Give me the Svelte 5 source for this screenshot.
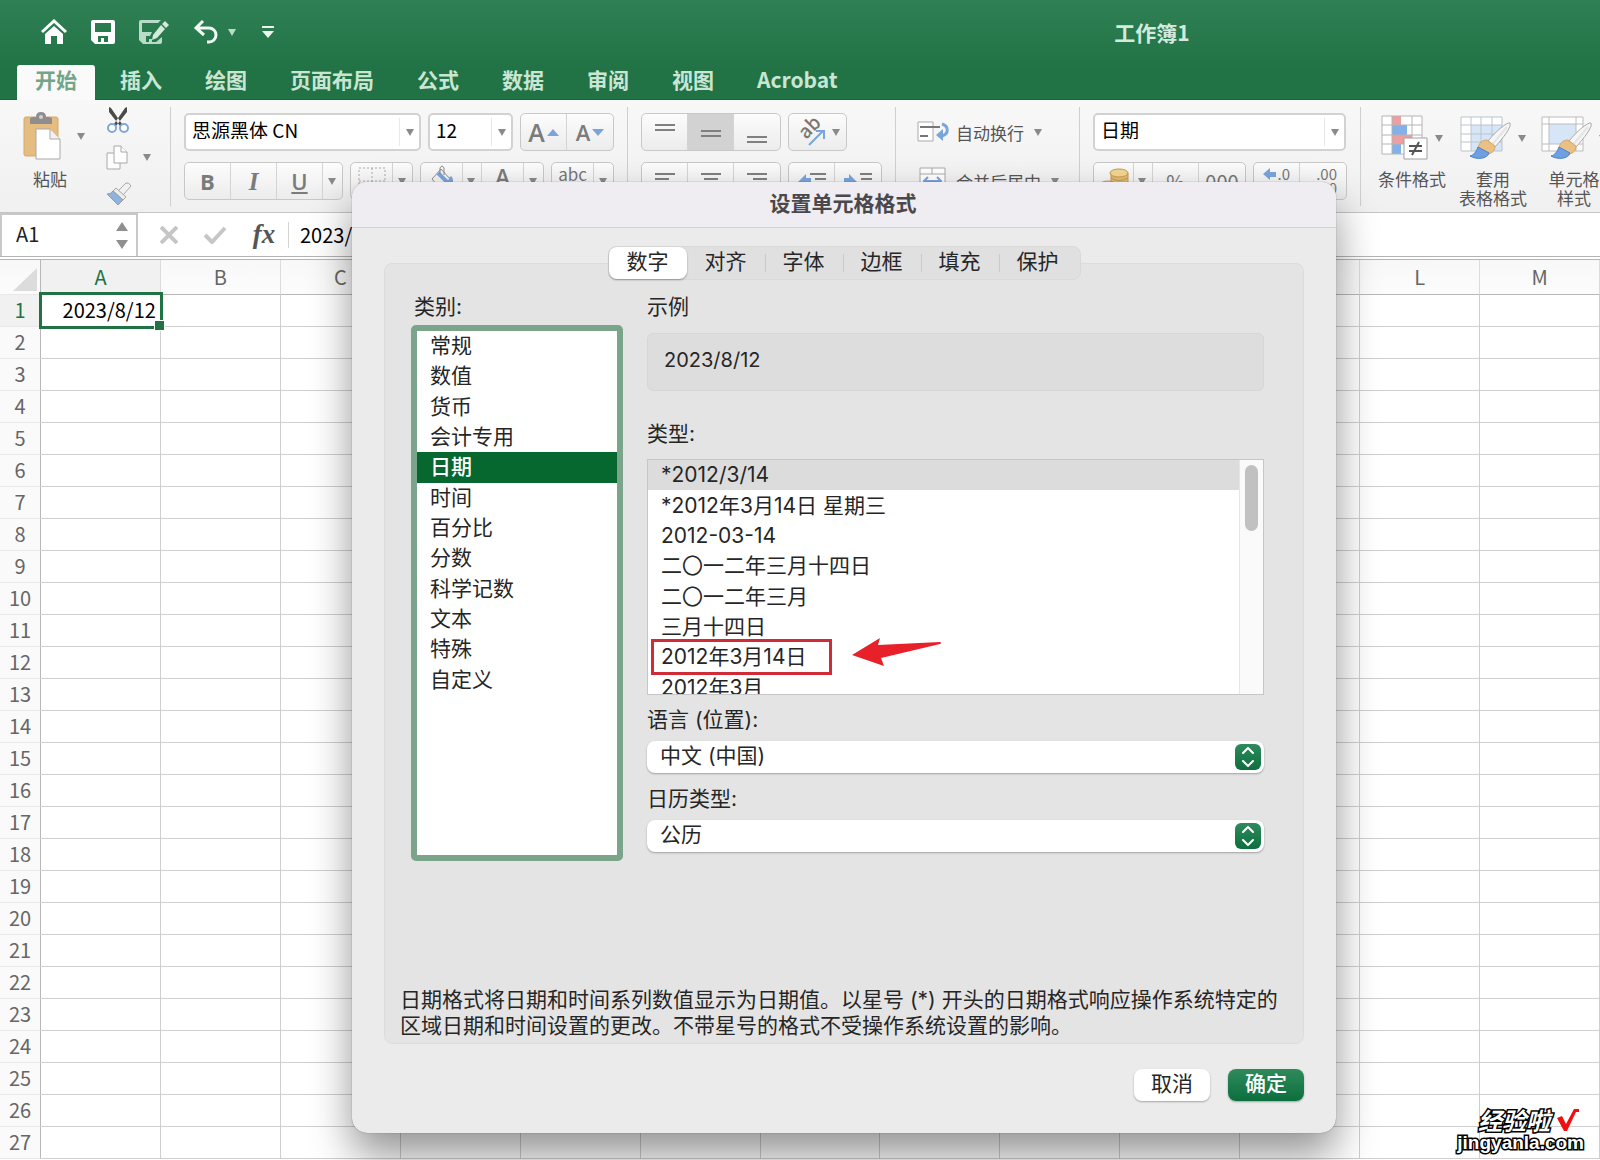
<script>
  const ribbonTabs = ['开始', '插入', '绘图', '页面布局', '公式', '数据', '审阅', '视图', 'Acrobat'];
  const columns = ['A', 'B', 'C', 'D', 'E', 'F', 'G', 'H', 'I', 'J', 'K', 'L', 'M'];
  const rows = Array.from({ length: 27 }, (_, i) => i + 1);

  const dialogTabs = ['数字', '对齐', '字体', '边框', '填充', '保护'];
  const categories = [
    '常规', '数值', '货币', '会计专用', '日期', '时间',
    '百分比', '分数', '科学记数', '文本', '特殊', '自定义'
  ];
  const types = [
    '*2012/3/14',
    '*2012年3月14日 星期三',
    '2012-03-14',
    '二〇一二年三月十四日',
    '二〇一二年三月',
    '三月十四日',
    '2012年3月14日',
    '2012年3月'
  ];

  let activeRibbon = $state('开始');
  let activeTab = $state('数字');
  let category = $state('日期');
  let type = $state('*2012/3/14');
  let cellValue = $state('2023/8/12');
</script>

{#snippet caret()}
  <svg class="caret" width="8" height="7" viewBox="0 0 8 7"><path d="M0 0h8L4 7z" fill="#8a8a8a" /></svg>
{/snippet}

{#snippet lines(widths, top, align)}
  <svg width="24" height="24" viewBox="0 0 24 24" stroke="#808080" stroke-width="2">
    {#each widths as w, i}
      {@const x = align === 'left' ? 2 : align === 'right' ? 22 - w : 12 - w / 2}
      <path d="M{x} {top + i * 5}h{w}" />
    {/each}
  </svg>
{/snippet}

{#snippet brush()}
  <path d="M50 8c-3-1-14 8-22 18l7 6c8-9 17-20 15-24z" fill="#f6f6f6" stroke="#a9a9a9" />
  <path d="M31 31 47 12" stroke="#e4e4e4" stroke-width="2" />
  <path d="M27 25c-5 0-8 3-9 8l10 6c5-1 7-4 7-8z" fill="#ebc083" stroke="#d3a566" />
  <path d="M18 32c-2 5-4 8-8 9 7 4 17 3 19-3z" fill="#6d9fe3" stroke="#4d80c8" />
{/snippet}

{#snippet stepper()}
  <span class="stepper">
    <svg width="14" height="20" viewBox="0 0 14 20" fill="none" stroke="#fff" stroke-width="2" stroke-linecap="round" stroke-linejoin="round">
      <path d="M2 6l5-5 5 5M2 14l5 5 5-5" />
    </svg>
  </span>
{/snippet}

<div class="app">
  <header>
    <div class="title-row">
      <div class="quick">
        <button aria-label="主页">
          <svg width="26" height="26" viewBox="0 0 26 26">
            <path d="M1 13 13 2l12 11" fill="none" stroke="#fff" stroke-width="3" />
            <path d="M13 7l9 8v10h-6v-8h-6v8H4V15z" fill="#fff" />
          </svg>
        </button>
        <button aria-label="保存">
          <svg width="24" height="24" viewBox="0 0 24 24">
            <path fill="#fff" fill-rule="evenodd" d="M2 0h20q2 0 2 2v20q0 2-2 2H4l-4-4V2q0-2 2-2zM4 3v9h16V3zM7 16v6h3v-4h3v4h4v-6z" />
          </svg>
        </button>
        <button aria-label="另存为">
          <svg width="30" height="24" viewBox="0 0 30 24">
            <path fill="#b9dcc8" fill-rule="evenodd" d="M2 0h20l-3 3H3v9h10l-2 4H7v6h3v-3h3v3h4l6-5v5q0 2-2 2H4l-4-4V2q0-2 2-2z" />
            <path fill="#d3eadc" d="M26 1l4 4-3 3-4-4zM22 5l4 4-8 9-5 2 1-5z" />
          </svg>
        </button>
        <button class="undo" aria-label="撤消">
          <svg width="25" height="24" viewBox="0 0 25 24" fill="none" stroke="#f1f9f4" stroke-width="3">
            <path d="M10 1 3 8l8 7M3 8h13a7 7 0 0 1 0 14h-2" />
          </svg>
          <svg width="8" height="7" viewBox="0 0 8 7"><path d="M0 0h8L4 7z" fill="#b9dcc8" /></svg>
        </button>
        <button aria-label="自定义工具栏">
          <svg width="12" height="12" viewBox="0 0 12 12"><path d="M0 0h12v2H0zM0 5h12l-6 7z" fill="#e9f5ee" /></svg>
        </button>
      </div>
      <h1>工作簿1</h1>
    </div>
    <nav>
      {#each ribbonTabs as tab}
        <button class:active={tab === activeRibbon} onclick={() => (activeRibbon = tab)}>{tab}</button>
      {/each}
    </nav>
  </header>

  <div class="ribbon">
    <div class="group clipboard">
      <button class="paste">
        <span class="with-caret">
          <svg width="40" height="48" viewBox="0 0 40 48">
            <rect x="1" y="5" width="34" height="39" rx="2" fill="#e6bd80" stroke="#d4a968" />
            <path d="M7 12V7q0-2 3-2h3q0-5 5-5t5 5h3q3 0 3 2v5z" fill="#8e8e8e" />
            <circle cx="18" cy="5" r="2" fill="#d0d0d0" />
            <path d="M13 17h14l10 10v20H13z" fill="#fff" stroke="#a9a9a9" />
            <path d="M27 17v10h10" fill="#f2f2f2" stroke="#a9a9a9" />
          </svg>
          {@render caret()}
        </span>
        <span>粘贴</span>
      </button>
      <div class="clip-tools">
        <button aria-label="剪切">
          <svg width="24" height="26" viewBox="0 0 24 26">
            <path d="M3 0 5 1 16 17l-2 2L3 5zM21 0l-2 1L8 17l2 2L21 5z" fill="#4a4a4a" />
            <g fill="#fff" stroke="#7ea6d8" stroke-width="2"><circle cx="6" cy="21" r="4" /><circle cx="18" cy="21" r="4" /></g>
          </svg>
        </button>
        <button class="with-caret" aria-label="复制">
          <svg width="24" height="26" viewBox="0 0 24 26" fill="#fdfdfd" stroke="#a8a8a8">
            <path d="M1 8h13v16H1z" /><path d="M8 1h7l6 6v11H8z" /><path d="M15 1v6h6" />
          </svg>
          {@render caret()}
        </button>
        <button aria-label="格式刷">
          <svg width="26" height="24" viewBox="0 0 26 24">
            <path d="M12 9l8-8q3-1 5 3l-8 9z" fill="#f1f1f1" stroke="#a8a8a8" />
            <path d="M10 6l10 9-3 3L7 9z" fill="#ececec" stroke="#a8a8a8" />
            <path d="M7 9l10 9-5 5L1 12q4 0 6-3z" fill="#8db4de" stroke="#9c9c9c" />
          </svg>
        </button>
      </div>
    </div>

    <div class="group">
      <div class="tool-row">
        <div class="combo font-name">
          <select aria-label="字体"><option>思源黑体 CN</option></select>
          <i>{@render caret()}</i>
        </div>
        <div class="combo font-size">
          <select aria-label="字号"><option>12</option></select>
          <i>{@render caret()}</i>
        </div>
        <div class="buttons">
          <button class="tool letter">A<svg width="12" height="7" viewBox="0 0 12 7"><path d="M6 0l6 7H0z" fill="#7aa5dc" /></svg></button>
          <button class="tool letter small">A<svg width="12" height="7" viewBox="0 0 12 7"><path d="M0 0h12L6 7z" fill="#7aa5dc" /></svg></button>
        </div>
      </div>
      <div class="tool-row">
        <div class="buttons">
          <button class="tool letter"><b>B</b></button>
          <button class="tool letter italic"><b>I</b></button>
          <button class="tool letter plain"><u>U</u></button>
          <button class="drop" aria-label="下划线">{@render caret()}</button>
        </div>
        <div class="buttons">
          <button class="tool narrow" aria-label="边框">
            <svg width="28" height="28" viewBox="0 0 28 28" fill="none" stroke="#aaa" stroke-dasharray="2 2"><path d="M1 1h26v26H1zM14 1v26M1 14h26" /></svg>
          </button>
          <button class="drop" aria-label="边框选项">{@render caret()}</button>
        </div>
        <div class="buttons">
          <button class="tool narrow" aria-label="填充颜色">
            <svg width="22" height="32" viewBox="0 0 22 32">
              <path d="M10 4 20 15 10 25 1 14z" fill="#f4f4f4" stroke="#8c8c8c" />
              <path d="M7 8l10 10 3-3" fill="none" stroke="#7aa5dc" stroke-width="4" />
              <path d="M19 12q3 4 1 9" fill="none" stroke="#7aa5dc" stroke-width="3" />
              <path d="M9 9V3q2-4 4 0v7" fill="none" stroke="#8c8c8c" />
            </svg>
          </button>
          <button class="drop" aria-label="填充选项">{@render caret()}</button>
          <button class="tool narrow letter font-color">A</button>
          <button class="drop" aria-label="字体颜色">{@render caret()}</button>
        </div>
        <div class="buttons">
          <button class="tool narrow phonetic">abc</button>
          <button class="drop" aria-label="拼音选项">{@render caret()}</button>
        </div>
      </div>
    </div>

    <div class="group">
      <div class="tool-row">
        <div class="buttons">
          <button class="tool" aria-label="顶端对齐">{@render lines([20, 20], 5, 'center')}</button>
          <button class="tool on" aria-label="垂直居中">{@render lines([20, 20], 11, 'center')}</button>
          <button class="tool" aria-label="底端对齐">{@render lines([20, 20], 17, 'center')}</button>
        </div>
        <div class="buttons">
          <button class="tool orient" aria-label="方向">
            <svg width="32" height="32" viewBox="0 0 32 32">
              <text x="11" y="24" transform="rotate(-45 11 24)" font-size="19" font-weight="500" fill="#777">ab</text>
              <path d="M14 29 28 15M21 15h8v8" fill="none" stroke="#7aa5dc" stroke-width="2" />
            </svg>
            {@render caret()}
          </button>
        </div>
      </div>
      <div class="tool-row">
        <div class="buttons">
          <button class="tool" aria-label="左对齐">{@render lines([20, 14, 20], 5, 'left')}</button>
          <button class="tool" aria-label="居中">{@render lines([20, 14, 20], 5, 'center')}</button>
          <button class="tool" aria-label="右对齐">{@render lines([20, 14, 20], 5, 'right')}</button>
        </div>
        <div class="buttons">
          <button class="tool" aria-label="减少缩进">
            <svg width="28" height="24" viewBox="0 0 28 24"><path d="M0 13l8-8v4h5v7H8v4z" fill="#7aa5dc" /><path d="M12 5h16M17 10h11M17 15h11" stroke="#808080" stroke-width="2" /></svg>
          </button>
          <button class="tool" aria-label="增加缩进">
            <svg width="28" height="24" viewBox="0 0 28 24"><path d="M13 13 5 5v4H0v7h5v4z" fill="#7aa5dc" /><path d="M16 5h12M17 10h11M17 15h11" stroke="#808080" stroke-width="2" /></svg>
          </button>
        </div>
      </div>
    </div>

    <div class="group wrap">
      <button class="labelled">
        <svg width="33" height="24" viewBox="0 0 33 24">
          <path d="M1 2h15v19H1z" fill="#fff" stroke="#aaa" /><path d="M3 7h20M3 16h8" stroke="#777" stroke-width="2" />
          <path d="M25 4c7 2 7 10 0 12" fill="none" stroke="#7aa5dc" stroke-width="3" /><path d="M19 15l7-6v12z" fill="#7aa5dc" />
        </svg>
        自动换行 {@render caret()}
      </button>
      <button class="labelled">
        <svg width="33" height="28" viewBox="0 0 33 28">
          <path d="M3 1h25v26H3zM3 7h25M15 1v6M3 21h25M15 21v6" fill="#fff" stroke="#aaa" />
          <path d="M8 14h15M11 10l-4 4 4 4M20 10l4 4-4 4" fill="none" stroke="#7aa5dc" stroke-width="2" />
        </svg>
        合并后居中 {@render caret()}
      </button>
    </div>

    <div class="group">
      <div class="tool-row">
        <div class="combo number-format">
          <select aria-label="数字格式"><option>日期</option></select>
          <i>{@render caret()}</i>
        </div>
      </div>
      <div class="tool-row">
        <div class="buttons">
          <button class="tool money" aria-label="货币">
            <svg width="30" height="28" viewBox="0 0 30 28" stroke="#c39a4e">
              <path d="M12 6v18h17V6z" fill="#e3bd70" /><ellipse cx="20" cy="6" rx="9" ry="4" fill="#f3d793" />
              <path d="M12 11q8 5 17 0M12 16q8 5 17 0" fill="none" />
              <ellipse cx="9" cy="18" rx="8" ry="4" fill="#f3d793" />
            </svg>
          </button>
          <button class="drop" aria-label="货币选项">{@render caret()}</button>
          <button class="tool digits">%</button>
          <button class="tool digits">000</button>
        </div>
        <div class="buttons">
          <button class="tool decimals">
            <span><svg width="13" height="12" viewBox="0 0 13 12"><path d="M0 6l7-6v4h6v5H7v3z" fill="#7aa5dc" /></svg>.0</span>
            <span>.00</span>
          </button>
          <button class="tool decimals"><span>.00</span><span>.0</span></button>
        </div>
      </div>
    </div>

    <div class="styles">
      <button>
        <span class="with-caret">
          <svg width="48" height="46" viewBox="0 0 48 46">
            <path d="M1 1h40v38H1z" fill="#fff" />
            <path d="M11 1h9v9h-9zM11 20h20v9H11z" fill="#ee9da0" /><path d="M11 10h15v10H11zM11 29h9v10h-9z" fill="#83b0e8" />
            <path d="M1 1h40v38H1zM11 1v38M31 1v38M1 10h40M1 20h40M1 29h40" fill="none" stroke="#b4b4b4" />
            <path d="M23 23h23v21H23z" fill="#fff" stroke="#a0a0a0" />
            <path d="M28 31h13M28 36h13M38 27l-7 13" stroke="#555" stroke-width="2" />
          </svg>
          {@render caret()}
        </span>
        <span>条件格式</span>
      </button>
      <button>
        <span class="with-caret">
          <svg width="52" height="46" viewBox="0 0 52 46">
            <path d="M1 2h41v34H1z" fill="#fff" /><path d="M11 10h31v26H11z" fill="#d6e6f7" />
            <path d="M1 2h41v34H1zM11 2v34M21 2v34M32 2v34M1 10h41M1 19h41M1 27h41" fill="none" stroke="#bcc4cc" />
            {@render brush()}
          </svg>
          {@render caret()}
        </span>
        <span>套用<br />表格格式</span>
      </button>
      <button>
        <span class="with-caret">
          <svg width="52" height="46" viewBox="0 0 52 46">
            <path d="M1 2h41v34H1z" fill="#fff" /><path d="M8 9h27v20H8z" fill="#d6e6f7" />
            <path d="M1 2h41v34H1zM8 2v34M1 9h41M1 29h41M35 2v34" fill="none" stroke="#bcbcbc" />
            {@render brush()}
          </svg>
          {@render caret()}
        </span>
        <span>单元格<br />样式</span>
      </button>
    </div>
  </div>

  <div class="formula-bar">
    <div class="name-box">
      <input aria-label="名称框" value="A1" />
      <svg width="12" height="28" viewBox="0 0 12 28" fill="#8f8f8f"><path d="M6 0l6 9H0zM0 18h12l-6 9z" /></svg>
    </div>
    <button aria-label="取消输入">
      <svg width="18" height="18" viewBox="0 0 18 18" stroke="#c6c6c6" stroke-width="4"><path d="M1 1l16 16M17 1 1 17" /></svg>
    </button>
    <button aria-label="输入">
      <svg width="24" height="18" viewBox="0 0 24 18" fill="none" stroke="#c6c6c6" stroke-width="4"><path d="M2 9l7 7L22 2" /></svg>
    </button>
    <button class="fx">fx</button>
    <input class="formula" aria-label="编辑栏" bind:value={cellValue} />
  </div>

  <table>
    <thead>
      <tr>
        <th class="corner" aria-label="全选"><svg width="24" height="23" viewBox="0 0 24 23"><path d="M24 0v23H0z" fill="#dcdcdc" /></svg></th>
        {#each columns as col}
          <th class:current={col === 'A'}>{col}</th>
        {/each}
      </tr>
    </thead>
    <tbody>
      {#each rows as row}
        <tr>
          <th class:current={row === 1}>{row}</th>
          {#each columns as col}
            {#if row === 1 && col === 'A'}
              <td class="selected">{cellValue}</td>
            {:else}
              <td></td>
            {/if}
          {/each}
        </tr>
      {/each}
    </tbody>
  </table>

  <div class="dialog" role="dialog" aria-labelledby="dialog-title">
    <h2 id="dialog-title">设置单元格格式</h2>
    <div class="dialog-body">
      <div class="segments">
        {#each dialogTabs as tab}
          <button class:active={tab === activeTab} onclick={() => (activeTab = tab)}>{tab}</button>
        {/each}
      </div>

      <div class="panel">
        <div class="panel-columns">
          <div class="category-col">
            <div class="label">类别:</div>
            <div class="category-list">
              <ul>
                {#each categories as item}
                  <li><button class:active={item === category} onclick={() => (category = item)}>{item}</button></li>
                {/each}
              </ul>
            </div>
          </div>

          <div class="detail-col">
            <div class="label">示例</div>
            <div class="sample">{cellValue}</div>
            <div class="label type-label">类型:</div>
            <div class="type-list">
              <ul>
                {#each types as item, i}
                  <li>
                    <button class:active={item === type} onclick={() => (type = item)}>{item}</button>
                    {#if i === 6}
                      <span class="mark"></span>
                      <svg class="arrow" width="90" height="30" viewBox="0 0 90 30">
                        <path d="M0 17 28 0 26 7 88 4q2 1 0 2L29 20l3 8z" fill="#e8202a" />
                      </svg>
                    {/if}
                  </li>
                {/each}
              </ul>
              <div class="scrollbar"><span></span></div>
            </div>
            <label class="label" for="locale">语言 (位置):</label>
            <div class="popup">
              <select id="locale"><option>中文 (中国)</option></select>
              {@render stepper()}
            </div>
            <label class="label calendar-label" for="calendar">日历类型:</label>
            <div class="popup">
              <select id="calendar"><option>公历</option></select>
              {@render stepper()}
            </div>
          </div>
        </div>
        <p>日期格式将日期和时间系列数值显示为日期值。以星号 (*) 开头的日期格式响应操作系统特定的区域日期和时间设置的更改。不带星号的格式不受操作系统设置的影响。</p>
      </div>

      <div class="actions">
        <button>取消</button>
        <button class="primary">确定</button>
      </div>
    </div>
  </div>

  <div class="watermark">
    <div class="brand">
      经验啦
      <svg width="24" height="24" viewBox="0 0 24 24"><path d="M1 10l5-2 4 8L18 1h5v3h-3L11 23H8z" fill="#f01010" /></svg>
    </div>
    <div class="site">jingyanla.com</div>
  </div>
</div>

<style>
  :global(body) {
    margin: 0;
    overflow: hidden;
  }

  .app {
    position: relative;
    min-height: 100vh;
    overflow: hidden;
    background: #fff;
    color: #222;
    font: 20px/26px 'Noto Sans CJK SC', sans-serif;
  }

  .app :global(*) {
    box-sizing: border-box;
  }

  button,
  input,
  select {
    margin: 0;
    padding: 0;
    border: 0;
    background: none;
    color: inherit;
    font: inherit;
    appearance: none;
    outline: none;
  }

  svg {
    display: block;
    flex: none;
  }

  ul {
    margin: 0;
    padding: 0;
    list-style: none;
  }

  /* title bar and ribbon tabs */
  header {
    height: 100px;
    background: linear-gradient(#2f8054, #217346 70%);
    border-bottom: 1px solid #1c643c;
  }

  .title-row {
    display: grid;
    grid-template-columns: 44% 56%;
    align-items: center;
    height: 64px;
  }

  .quick {
    display: flex;
    align-items: center;
    gap: 24px;
    padding-left: 41px;
  }

  .undo {
    display: flex;
    align-items: center;
    gap: 10px;
  }

  .quick button:last-child {
    margin-left: 2px;
  }

  h1 {
    margin: 0;
    color: #d3eadc;
    font-size: 21px;
    font-weight: 700;
    text-align: center;
  }

  nav {
    display: flex;
    gap: 7px;
    padding: 1px 0 0 17px;
  }

  nav button {
    height: 35px;
    padding: 0 18px 7px;
    border-radius: 3px 3px 0 0;
    color: #c9e6d5;
    font-size: 21px;
    font-weight: 700;
    white-space: nowrap;
  }

  nav button.active {
    background: #fafafa;
    color: #73a588;
  }

  /* ribbon */
  .ribbon {
    display: flex;
    height: 113px;
    padding-top: 7px;
    overflow: hidden;
    background: linear-gradient(#f8f8f8, #f0f0f0);
    border-bottom: 1px solid #c4c4c4;
    color: #555;
    font-size: 17px;
    line-height: 19px;
  }

  .group {
    display: flex;
    flex: none;
    flex-direction: column;
    gap: 11px;
    height: 99px;
    padding: 6px 13px 0;
    border-right: 1px solid #cfcfcf;
  }

  .clipboard {
    flex-direction: row;
    gap: 21px;
    width: 171px;
    padding: 0 0 0 23px;
  }

  .with-caret {
    display: flex;
    align-items: center;
    gap: 14px;
  }

  .paste {
    display: flex;
    flex-direction: column;
    align-items: flex-start;
    gap: 9px;
    padding-top: 5px;
  }

  .paste > span:last-child {
    padding-left: 10px;
  }

  .clip-tools {
    display: flex;
    flex-direction: column;
    justify-content: space-between;
    align-items: flex-start;
  }

  .clip-tools .with-caret {
    gap: 13px;
  }

  .tool-row {
    display: flex;
    gap: 7px;
  }

  .combo {
    position: relative;
    height: 38px;
  }

  .combo select {
    width: 100%;
    height: 100%;
    padding: 0 30px 5px 6px;
    border: 2px solid #d2d2d2;
    border-radius: 5px;
    background: #fff;
    color: #000;
    font-size: 19px;
  }

  .combo i {
    position: absolute;
    top: 5px;
    right: 0;
    bottom: 5px;
    display: flex;
    align-items: center;
    width: 22px;
    padding-left: 6px;
    border-left: 1px solid #e8e8e8;
    pointer-events: none;
  }

  .font-name {
    width: 237px;
  }

  .font-size {
    width: 85px;
  }

  .number-format {
    width: 253px;
  }

  .buttons {
    display: flex;
    height: 38px;
    border: 1px solid #c8c8c8;
    border-radius: 5px;
    background: linear-gradient(#fcfcfc, #ececec);
    overflow: hidden;
  }

  .tool,
  .drop {
    display: flex;
    align-items: center;
    justify-content: center;
    border-right: 1px solid #d4d4d4;
  }

  .tool {
    width: 46px;
  }

  .tool:last-child,
  .drop:last-child {
    border-right: 0;
  }

  .tool.on {
    background: #d2d2d2;
  }

  .tool.narrow {
    width: 42px;
  }

  .tool.money {
    width: 40px;
  }

  .tool.orient {
    gap: 5px;
    width: 57px;
  }

  .drop {
    width: 19px;
    padding-right: 2px;
  }

  .letter {
    gap: 2px;
    color: #7b7b7b;
    font-family: 'Open Sans', sans-serif;
    font-size: 25px;
    font-weight: 600;
  }

  .letter.small,
  .letter.plain {
    font-size: 22px;
  }

  .letter.font-color {
    align-items: flex-start;
    padding-top: 4px;
    font-size: 22px;
  }

  .letter b {
    font-size: 22px;
    font-weight: 700;
  }

  .letter.italic {
    font-family: 'Liberation Serif', serif;
    font-style: italic;
  }

  .letter.italic b {
    font-size: 25px;
  }

  .phonetic {
    align-items: flex-start;
    padding-top: 1px;
    color: #777;
  }

  .digits {
    color: #777;
    font-size: 20px;
  }

  .decimals {
    flex-direction: column;
    align-items: flex-end;
    padding-right: 9px;
    color: #777;
    font-size: 15px;
    line-height: 14px;
  }

  .decimals span {
    display: flex;
    align-items: center;
    gap: 2px;
  }

  .wrap {
    width: 184px;
    padding-left: 21px;
  }

  .labelled {
    display: flex;
    align-items: center;
    gap: 6px;
    height: 38px;
    white-space: nowrap;
  }

  .labelled .caret {
    margin-left: 4px;
  }

  .styles {
    display: flex;
    flex: none;
    gap: 5px;
    padding: 8px 0 0 13px;
  }

  .styles button {
    display: flex;
    flex-direction: column;
    align-items: center;
    gap: 8px;
    width: 76px;
    white-space: nowrap;
  }

  .styles .with-caret {
    gap: 6px;
  }

  /* formula bar */
  .formula-bar {
    display: flex;
    align-items: center;
    height: 47px;
    border-bottom: 4px double #b4b4b4;
    background: #fff;
  }

  .name-box {
    display: flex;
    align-items: center;
    width: 138px;
    height: 100%;
    padding: 0 8px 0 14px;
    border: 2px solid #c8c8c8;
    border-bottom: 0;
  }

  .name-box input {
    flex: 1;
    min-width: 0;
    padding-bottom: 3px;
  }

  .formula-bar button {
    display: flex;
    justify-content: center;
    width: 46px;
  }

  .formula-bar .name-box + button {
    margin-left: 8px;
  }

  .formula-bar .fx {
    width: 50px;
    padding: 0 0 1px 2px;
    color: #555;
    font: italic 700 27px/30px 'Liberation Serif', serif;
  }

  .formula {
    flex: 1;
    height: 26px;
    padding-left: 11px;
    border-left: 1px solid #d4d4d4;
    color: #000;
  }

  /* sheet */
  table {
    width: 100%;
    border-spacing: 0;
    table-layout: fixed;
  }

  th,
  td {
    height: 32px;
    padding: 0 0 2px;
    border-right: 1px solid #cfcfcf;
    border-bottom: 1px solid #cfcfcf;
    line-height: 28px;
  }

  th {
    background: #fafafa;
    color: #666;
    font-weight: 400;
  }

  thead th {
    height: 35px;
    padding: 0;
    border-right-color: #dcdcdc;
    border-bottom-color: #b8b8b8;
    background: linear-gradient(#f8f8f8, #fcfcfc);
  }

  th:first-child {
    width: 41px;
    border-right-color: #b8b8b8;
    border-bottom-color: #e8e8e8;
  }

  .corner svg {
    margin: 4px 0 0 13px;
  }

  th.current {
    background: #f0f1f0;
    color: #217346;
  }

  .selected {
    position: relative;
    padding-right: 4px;
    color: #000;
    text-align: right;
  }

  .selected::before {
    content: '';
    position: absolute;
    inset: -3px -3px -3px -2px;
    border: 3px solid #217346;
  }

  .selected::after {
    content: '';
    position: absolute;
    right: -5px;
    bottom: -5px;
    width: 9px;
    height: 9px;
    border: 1px solid #fff;
    background: #217346;
  }

  /* format cells dialog */
  .dialog {
    position: absolute;
    top: 182px;
    left: 22%;
    right: 16.5%;
    border-radius: 15px;
    overflow: hidden;
    background: #ebebeb;
    box-shadow: 0 0 1px rgba(0, 0, 0, 0.6), 0 22px 42px rgba(0, 0, 0, 0.42);
    color: #262626;
    font: 21px/26px Inter, 'Noto Sans CJK SC', sans-serif;
  }

  h2 {
    margin: 0;
    padding: 9px 2px 10px 0;
    border-bottom: 1px solid #d4d1d7;
    background: #efecf2;
    color: #49484c;
    font-size: 21px;
    font-weight: 700;
    text-align: center;
  }

  .dialog-body {
    padding: 18px 32px 32px;
  }

  .segments {
    position: relative;
    display: flex;
    width: max-content;
    margin: 0 auto -17px;
    padding: 0 3px 0 0;
    border: 1px solid #d9d9d9;
    border-radius: 8px;
    background: #e0e0e0;
  }

  .segments button {
    position: relative;
    width: 78px;
    height: 32px;
    padding-bottom: 2px;
    border-radius: 8px;
  }

  .segments button.active {
    background: #fff;
    box-shadow: 0 1px 2px rgba(0, 0, 0, 0.35);
  }

  .segments button:nth-child(n + 3)::before {
    content: '';
    position: absolute;
    top: 7px;
    bottom: 7px;
    left: 0;
    width: 1px;
    background: #cacaca;
  }

  .panel {
    padding: 30px 39px 4px 26px;
    border: 1px solid #dcdcdc;
    border-radius: 8px;
    background: #e4e4e4;
  }

  .panel-columns {
    display: flex;
    gap: 24px;
  }

  .category-col .label {
    padding-left: 3px;
  }

  .category-list {
    width: 212px;
    height: 536px;
    margin-top: 5px;
    border: 6px solid #7aa58a;
    border-radius: 5px;
    background: #fff;
  }

  .category-list ul {
    display: grid;
    grid-template-rows: repeat(12, 1fr);
    height: 364px;
  }

  .dialog li button {
    display: flex;
    align-items: center;
    width: 100%;
    height: 100%;
    padding: 0 13px;
    white-space: nowrap;
  }

  .category-list button.active {
    background: #06672f;
    color: #fff;
    font-weight: 500;
  }

  .detail-col {
    flex: 1;
    min-width: 0;
  }

  .label {
    display: block;
  }

  .sample {
    height: 58px;
    margin-top: 13px;
    padding: 13px 16px;
    border: 1px solid #d6d6d6;
    border-radius: 6px;
    background: #ddd;
    font-size: 20px;
  }

  .type-label {
    margin-top: 30px;
  }

  .type-list {
    display: flex;
    height: 236px;
    margin: 12px 0;
    border: 1px solid #c6c6c6;
    background: #fff;
    overflow: hidden;
  }

  .type-list ul {
    display: grid;
    flex: 1;
    grid-template-rows: repeat(8, 1fr);
    height: 243px;
  }

  .type-list li {
    position: relative;
  }

  .type-list button.active {
    background: #dcdcdc;
  }

  .mark {
    position: absolute;
    top: -3px;
    left: 3px;
    width: 181px;
    height: 36px;
    border: 3px solid #d02c38;
  }

  .arrow {
    position: absolute;
    top: -4px;
    left: 204px;
  }

  .scrollbar {
    width: 24px;
    padding: 5px;
    border-left: 1px solid #e6e6e6;
    background: #fafafa;
  }

  .scrollbar span {
    display: block;
    height: 66px;
    border-radius: 7px;
    background: #c1c1c1;
  }

  .popup {
    position: relative;
    height: 32px;
    margin-top: 8px;
  }

  .popup select {
    width: 100%;
    height: 100%;
    padding: 0 40px 2px 13px;
    border-radius: 8px;
    background: #fff;
    box-shadow: 0 1px 2px rgba(0, 0, 0, 0.3);
  }

  .stepper {
    position: absolute;
    top: 3px;
    right: 3px;
    display: flex;
    align-items: center;
    justify-content: center;
    width: 26px;
    height: 26px;
    border-radius: 6px;
    background: linear-gradient(#2f8a5c, #0c6f3e);
    pointer-events: none;
  }

  .calendar-label {
    margin-top: 13px;
  }

  .panel p {
    margin: 126px -20px 0 -11px;
  }

  .actions {
    display: flex;
    justify-content: flex-end;
    gap: 18px;
    margin-top: 25px;
  }

  .actions button {
    width: 76px;
    height: 32px;
    padding-bottom: 2px;
    border-radius: 8px;
    background: #fff;
    box-shadow: 0 1px 2px rgba(0, 0, 0, 0.3);
  }

  .actions .primary {
    background: linear-gradient(#2f8a5c, #0c6f3e);
    color: #fff;
    font-weight: 500;
  }

  .watermark {
    position: absolute;
    right: 16px;
    bottom: 6px;
    color: #fff;
    text-align: right;
    font-weight: 700;
    -webkit-text-stroke: 3px #000;
    paint-order: stroke fill;
  }

  .brand {
    display: flex;
    align-items: center;
    justify-content: flex-end;
    gap: 6px;
    padding-right: 4px;
    font-size: 24px;
    font-style: italic;
    line-height: 24px;
  }

  .brand svg {
    stroke: none;
  }

  .site {
    font: 700 19px/22px 'Liberation Sans', sans-serif;
  }
</style>
